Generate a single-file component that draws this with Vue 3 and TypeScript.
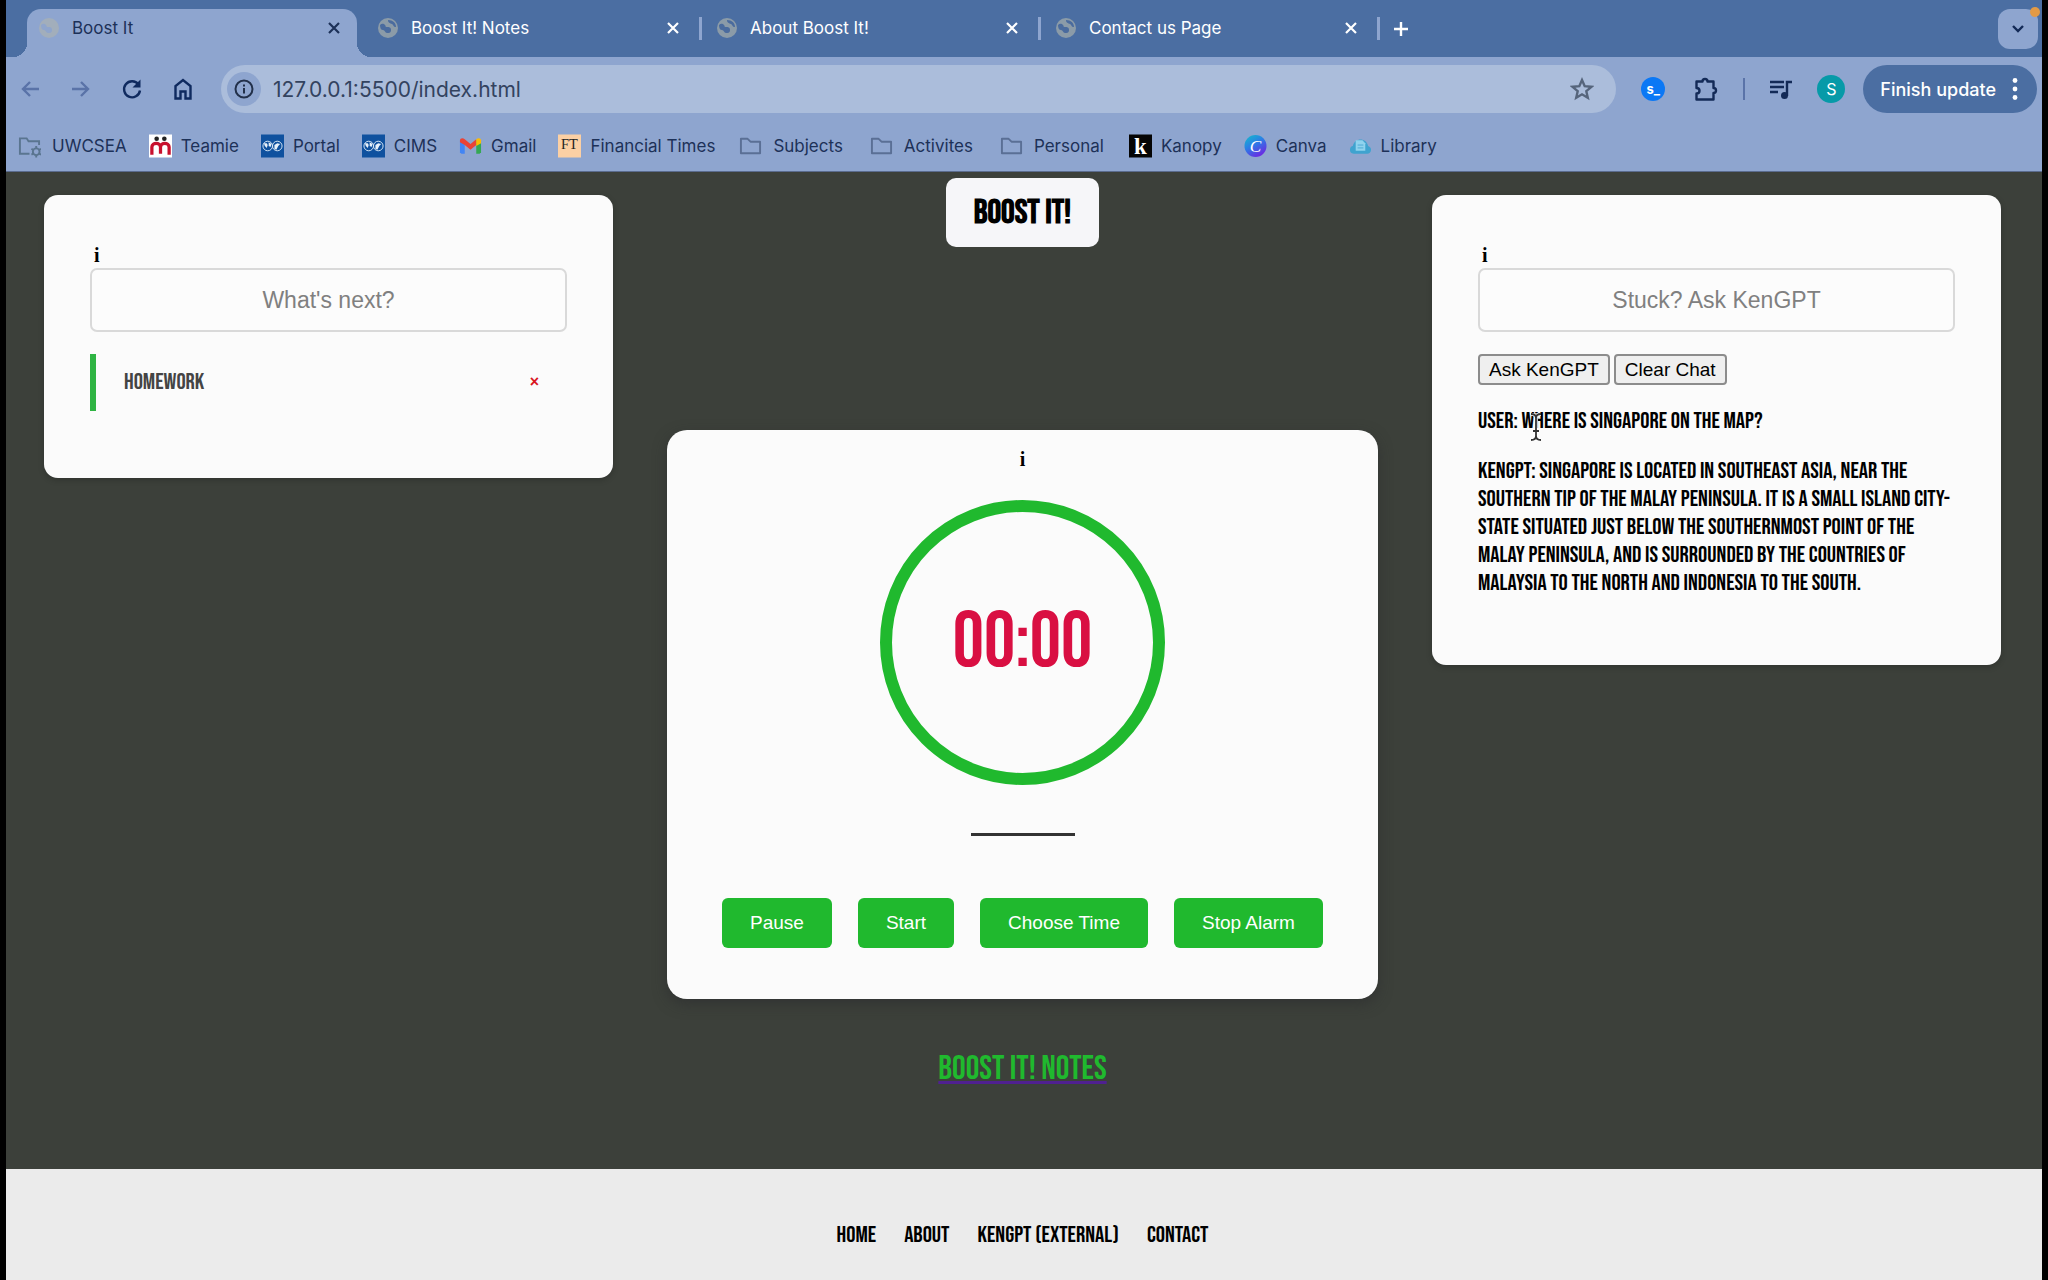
<script setup lang="ts">
import { ref } from 'vue'

interface Bookmark { label: string; icon: string }

const tabs = ref<string[]>(['Boost It', 'Boost It! Notes', 'About Boost It!', 'Contact us Page'])
const bookmarks: Bookmark[] = [
  { label: 'UWCSEA', icon: 'managed' },
  { label: 'Teamie', icon: 'teamie' },
  { label: 'Portal', icon: 'globe' },
  { label: 'CIMS', icon: 'globe' },
  { label: 'Gmail', icon: 'gmail' },
  { label: 'Financial Times', icon: 'ft' },
  { label: 'Subjects', icon: 'folder' },
  { label: 'Activites', icon: 'folder' },
  { label: 'Personal', icon: 'folder' },
  { label: 'Kanopy', icon: 'kanopy' },
  { label: 'Canva', icon: 'canva' },
  { label: 'Library', icon: 'library' },
]
const address = ref('127.0.0.1:5500/index.html')

const task = ref('')
const tasks = ref<string[]>(['Homework'])
function addTask() {
  if (task.value.trim()) tasks.value.push(task.value.trim())
  task.value = ''
}

const question = ref('')
const messages = ref<string[]>([
  'User: Where is Singapore on the map?',
  'KenGPT: Singapore is located in Southeast Asia, near the southern tip of the Malay Peninsula. It is a small island city-state situated just below the southernmost point of the Malay Peninsula, and is surrounded by the countries of Malaysia to the north and Indonesia to the south.',
])

const minutes = ref('')
const timerActions = ['Pause', 'Start', 'Choose Time', 'Stop Alarm']
const footerLinks = ['Home', 'About', 'KenGPT (External)', 'Contact']
</script>

<template>
  <div class="window">
    <header class="chrome">
      <div class="tabstrip">
        <template v-for="(tab, i) in tabs" :key="tab">
          <div class="tab" :class="{ active: i === 0 }">
            <svg class="favicon" viewBox="0 0 22 22">
              <circle cx="11" cy="11" r="10" :fill="i === 0 ? '#a2aebb' : '#8b9ba8'" />
              <path v-if="i > 0" d="M3 8c2-2 4-1 5 0s0 2 2 2 4 0 4 3-2 3-4 3-2-3-4-3-3-2-3-5zM11 3c0 3 2 3 4 4s1 3 4 3c0-4-3-7-8-7z" fill="#4a6b9e" />
              <path v-else d="M3 8c2-2 4-1 5 0s0 2 2 2 4 0 4 3-2 3-4 3-2-3-4-3-3-2-3-5z" fill="#8fa5cc" />
            </svg>
            <button class="tab-title">{{ tab }}</button>
            <button class="tab-close" :aria-label="'Close ' + tab">
              <svg width="12" height="12" viewBox="0 0 12 12"><path d="M1 1l10 10M11 1L1 11" stroke="currentColor" stroke-width="2.2" /></svg>
            </button>
          </div>
          <span class="tab-sep" :class="{ hidden: i === 0 }"></span>
        </template>
        <button class="new-tab" aria-label="New tab">
          <svg width="16" height="16" viewBox="0 0 16 16"><path d="M8 1v14M1 8h14" stroke="currentColor" stroke-width="2.4" /></svg>
        </button>
        <button class="tab-search" aria-label="Search tabs">
          <svg width="12" height="8" viewBox="0 0 12 8"><path d="M1 1l5 5 5-5" fill="none" stroke="currentColor" stroke-width="2.4" /></svg>
          <span class="dot"></span>
        </button>
      </div>

      <div class="toolbar">
        <nav class="nav-buttons">
          <button class="dim" aria-label="Back"><svg viewBox="0 0 24 24"><path d="M21 12H5M12 5l-7 7 7 7" /></svg></button>
          <button class="dim" aria-label="Forward"><svg viewBox="0 0 24 24"><path d="M3 12h16M12 5l7 7-7 7" /></svg></button>
          <button aria-label="Reload"><svg viewBox="0 0 24 24"><path d="M18.500 7.500A8 8 0 1 0 20 13.500" /><path d="M20.500 2.500v8h-8z" fill="currentColor" stroke="none" /></svg></button>
          <button aria-label="Home"><svg viewBox="0 0 24 24"><path d="M4.500 21.500V9L12 3l7.500 6v12.500h-5v-7h-5v7z" /></svg></button>
        </nav>
        <div class="omnibox">
          <span class="site-info">
            <svg width="20" height="20" viewBox="0 0 20 20"><circle cx="10" cy="10" r="8.500" fill="none" stroke="#22304a" stroke-width="2" /><path d="M10 9v5.500M10 5.500v2" stroke="#22304a" stroke-width="2" /></svg>
          </span>
          <input v-model="address" type="text" aria-label="Address" />
          <button class="star" aria-label="Bookmark this page">
            <svg width="24" height="24" viewBox="0 0 24 24"><path d="M12 3l2.700 6.200 6.700.6-5.100 4.400 1.500 6.600L12 17.300l-5.800 3.500 1.500-6.600L2.600 9.800l6.700-.6z" fill="none" stroke="#56657c" stroke-width="2.400" /></svg>
          </button>
        </div>
        <div class="extensions">
          <button class="ext-s" aria-label="Extension">s_</button>
          <button aria-label="Extensions"><svg width="26" height="26" viewBox="0 0 26 26"><path d="M3.500 5.500h6a2.500 2.500 0 0 1 5 0h6v6.500a2.500 2.500 0 0 1 0 5v6.500h-17v-6c4 0 4-5.500 0-5.500z" fill="none" stroke="#132a57" stroke-width="2.400" stroke-linejoin="round" /></svg></button>
          <span class="bar-sep"></span>
          <button aria-label="Media controls"><svg width="24" height="24" viewBox="0 0 24 24"><path d="M1 5h14M1 10h14M1 15h8M18 19V5h5" fill="none" stroke="#132a57" stroke-width="2.400" /><circle cx="15.500" cy="18.500" r="3.500" fill="#132a57" /></svg></button>
          <button class="avatar" aria-label="Profile">S</button>
        </div>
        <button class="update">
          Finish update
          <svg width="6" height="24" viewBox="0 0 6 24" fill="#fff"><circle cx="3" cy="3.500" r="2.400" /><circle cx="3" cy="12" r="2.400" /><circle cx="3" cy="20.500" r="2.400" /></svg>
        </button>
      </div>

      <nav class="bookmarks">
        <a v-for="b in bookmarks" :key="b.label" href="#" :class="b.icon">
          <svg class="mark" viewBox="0 0 24 24">
            <template v-if="b.icon === 'managed'">
              <path d="M12 20H2V4h7l2 3h11v4" fill="none" stroke="#5a7590" stroke-width="2" />
              <circle cx="19" cy="18" r="3.500" fill="none" stroke="#5a7590" stroke-width="2" />
              <path d="M19 12v2M19 22v2M14 15l2 1M22 20l2 1M24 15l-2 1M14 21l2-1" stroke="#5a7590" stroke-width="2" />
            </template>
            <path v-else-if="b.icon === 'folder'" d="M2 19.500v-15h7l3 3h10v12z" fill="none" stroke="#5a6f95" stroke-width="2" stroke-linejoin="round" />
            <template v-else-if="b.icon === 'teamie'">
              <path d="M0 0h24v24H0z" fill="#fff" />
              <circle cx="8" cy="4.500" r="2.400" fill="#222" /><circle cx="16" cy="4.500" r="2.400" fill="#222" />
              <path d="M3 21v-8c0-5 9-5 9 0v7M12 13c0-5 9-5 9 0v8" fill="none" stroke="#c8102e" stroke-width="3.400" />
            </template>
            <template v-else-if="b.icon === 'globe'">
              <path d="M0 0h24v24H0z" fill="#0f519f" />
              <circle cx="7" cy="12" r="5" fill="none" stroke="#d6e6f5" /><circle cx="17" cy="12" r="5" fill="none" stroke="#d6e6f5" />
              <path d="M3 9l3 0 1 2-1 3-2-2zM8 8l3 2-1 3-2-1zM14 15l0-4 3-2 3 1-2 2-2 4z" fill="#e8f1fa" />
            </template>
            <template v-else-if="b.icon === 'gmail'">
              <path d="M1 6h5v14H2.500L1 18.500z" fill="#4285f4" /><path d="M18 6h5v12.500L21.500 20H18z" fill="#34a853" />
              <path d="M1 6c0-2 3-3 5-1l6 5 6-5v6l-6 5-6-5-5-3z" fill="#ea4335" /><path d="M18 5c2-2 5-1 5 1v3l-5 3z" fill="#fbbc04" />
            </template>
            <template v-else-if="b.icon === 'ft'">
              <path d="M0 0h24v24H0z" fill="#fcd0a4" /><text x="12" y="15" text-anchor="middle" class="ft-text">FT</text>
            </template>
            <template v-else-if="b.icon === 'kanopy'">
              <path d="M0 0h24v24H0z" fill="#050505" /><text x="12" y="20" text-anchor="middle" class="kanopy-text">k</text>
            </template>
            <template v-else-if="b.icon === 'canva'">
              <defs><linearGradient id="cv" x1="0" y1="0" x2=".6" y2="1"><stop offset="0" stop-color="#12bfc9" /><stop offset=".5" stop-color="#2b7de6" /><stop offset="1" stop-color="#6a2be2" /></linearGradient></defs>
              <circle cx="12" cy="12" r="11.500" fill="url(#cv)" /><text x="12" y="18" text-anchor="middle" class="canva-text">C</text>
            </template>
            <template v-else>
              <path d="M1 16c0-3 2-4 3-4 2-9 14-9 16 0 2 1 3 2 3 4 0 3-2 4-4 4H5c-3 0-4-2-4-4z" fill="#3fa3cf" /><path d="M7 6h7l3 3v8H7z" fill="#8fd3ee" /><path d="M9 11h6M9 14h6" stroke="#4ba9d2" />
            </template>
          </svg>
          {{ b.label }}
        </a>
      </nav>
    </header>

    <main class="page">
      <section class="card side">
        <span class="info">i</span>
        <form @submit.prevent="addTask">
          <input v-model="task" class="field" type="text" placeholder="What's next?" aria-label="New task" />
        </form>
        <ul class="tasks">
          <li v-for="(t, i) in tasks" :key="t">
            {{ t }}
            <button aria-label="Remove task" @click="tasks.splice(i, 1)">×</button>
          </li>
        </ul>
      </section>

      <div class="middle">
        <h1 class="brand">Boost It!</h1>
        <section class="card timer">
          <span class="info">i</span>
          <div class="dial">00:00</div>
          <input v-model="minutes" class="minutes" type="text" aria-label="Minutes" />
          <div class="actions">
            <button v-for="a in timerActions" :key="a">{{ a }}</button>
          </div>
        </section>
        <a class="notes" href="#">Boost It! Notes</a>
      </div>

      <section class="card side chat">
        <span class="info">i</span>
        <input v-model="question" class="field" type="text" placeholder="Stuck? Ask KenGPT" aria-label="Question for KenGPT" />
        <div class="chat-buttons">
          <button>Ask KenGPT</button>
          <button @click="messages = []">Clear Chat</button>
        </div>
        <p v-for="m in messages" :key="m">{{ m }}</p>
        <svg class="caret" viewBox="0 0 12 28"><path d="M1 1c3 0 5 1 5 4v18c0 3-2 4-5 4M11 1c-3 0-5 1-5 4M6 23c0 3 2 4 5 4M3 18h6" fill="none" stroke="#fff" stroke-width="3.500" /><path d="M1 1c3 0 5 1 5 4v18c0 3-2 4-5 4M11 1c-3 0-5 1-5 4M6 23c0 3 2 4 5 4M3 18h6" fill="none" stroke="#333" stroke-width="1.800" /></svg>
      </section>
    </main>

    <footer class="footer">
      <a v-for="l in footerLinks" :key="l" href="#">{{ l }}</a>
    </footer>
  </div>
</template>

<style>
body { margin: 0; background: #000; }
</style>

<style scoped>
* { box-sizing: border-box; }
button { border: 0; padding: 0; background: none; color: inherit; font: inherit; }
a { color: inherit; text-decoration: none; }
.window {
  display: flex;
  flex-direction: column;
  min-height: 100vh;
  margin: 0 6px;
  background: #3c403a;
}
.chrome {
  background: #8ea5cf;
  border-bottom: 1px solid #5b6c8e;
  color: #1d3158;
  font-family: Inter, sans-serif;
}
.tabstrip {
  display: flex;
  align-items: center;
  height: 57px;
  padding: 0 4px 0 21px;
  background: #4b6ea2;
  color: #fff;
  font-size: 17px;
}
.tab {
  display: flex;
  flex: 0 1 330px;
  align-items: center;
  gap: 12px;
  align-self: flex-end;
  height: 48px;
  padding: 0 17px 10px 11px;
}
.tab.active {
  position: relative;
  background: #8ea5cf;
  border-radius: 14px 14px 0 0;
  color: #1d3158;
}
.tab.active::before,
.tab.active::after {
  content: '';
  position: absolute;
  bottom: 0;
  width: 14px;
  height: 14px;
}
.tab.active::before { right: 100%; background: radial-gradient(circle at 0 0, transparent 14px, #8ea5cf 14px); }
.tab.active::after { left: 100%; background: radial-gradient(circle at 100% 0, transparent 14px, #8ea5cf 14px); }
.favicon { width: 22px; height: 22px; }
.tab-title { flex: 1; text-align: left; }
.tab-close { display: flex; }
.tab-sep { width: 3px; height: 23px; margin: 0 3px; background: #8ea5cf; }
.tab-sep.hidden { visibility: hidden; }
.new-tab { display: flex; margin-left: 10px; }
.tab-search {
  position: relative;
  display: flex;
  align-items: center;
  justify-content: center;
  width: 40px;
  height: 40px;
  margin-left: auto;
  border-radius: 12px;
  background: #8ea5cf;
  color: #132a57;
}
.dot { position: absolute; top: -2px; right: -2px; width: 10px; height: 10px; border-radius: 50%; background: #e39a45; }
.toolbar { display: flex; align-items: center; padding: 8px 5px 8px 12px; }
.nav-buttons { display: flex; gap: 25px; color: #0f2a5f; }
.nav-buttons button { display: flex; width: 26px; }
.nav-buttons svg { width: 24px; height: 24px; fill: none; stroke: currentColor; stroke-width: 2.4; }
.nav-buttons .dim { color: #5a73a8; }
.omnibox {
  display: flex;
  flex: 1;
  align-items: center;
  height: 48px;
  margin-left: 24px;
  padding: 0 22px 0 6px;
  border-radius: 24px;
  background: #abbddb;
}
.site-info { display: flex; align-items: center; justify-content: center; width: 34px; height: 34px; border-radius: 50%; background: #8ea5cf; }
.omnibox input { flex: 1; margin-left: 12px; padding: 0; border: 0; outline: 0; background: none; color: #33435f; font: 21px Inter, sans-serif; }
.star { display: flex; }
.extensions { display: flex; align-items: center; gap: 24px; margin: 0 18px 0 25px; }
.extensions button { display: flex; align-items: center; justify-content: center; }
.extensions .ext-s { width: 24px; height: 24px; margin-right: 4px; border-radius: 50%; background: #0b78f5; color: #fff; font-size: 13px; font-weight: 700; }
.bar-sep { width: 2px; height: 22px; background: #5a73a8; }
.extensions .avatar { width: 28px; height: 28px; border-radius: 50%; background: #069aa8; color: #fff; font-size: 16px; }
.update { display: flex; align-items: center; gap: 16px; height: 48px; padding: 0 19px 0 17px; border-radius: 24px; background: #4b6ea2; color: #fff; font-size: 18px; font-weight: 500; white-space: nowrap; }
.bookmarks { display: flex; gap: 22px; padding: 13px 12px; font-size: 17px; line-height: 24px; white-space: nowrap; }
.bookmarks a { display: flex; align-items: center; gap: 9px; }
.bookmarks .managed, .bookmarks .folder { gap: 11px; }
.bookmarks .folder { padding: 0 3px 0 2px; }
.mark { width: 23px; height: 24px; }
.ft-text { font: 15px "Liberation Serif", serif; fill: #222; }
.kanopy-text { font: bold 24px "Liberation Serif", serif; fill: #fff; }
.canva-text { font: italic 18px "Liberation Serif", serif; fill: #fff; }

.page {
  display: grid;
  grid-template-columns: 569fr 711fr 569fr;
  align-items: start;
  gap: 54px;
  flex: 1;
  padding: 6px 41px 40px 38px;
  font-family: "Bebas Neue", "Liberation Sans Narrow", sans-serif;
  text-transform: uppercase;
}
.card { display: flex; flex-direction: column; background: #fbfbfb; }
.side { margin-top: 17px; padding: 48px 46px 67px; border-radius: 14px; box-shadow: 0 2px 6px rgba(0, 0, 0, .2); }
.info { color: #000; font: bold 20px/24px "Liberation Serif", serif; text-transform: none; }
.side .info { padding: 0 0 1px 4px; }
.field {
  width: 100%;
  height: 64px;
  padding: 0;
  border: 2px solid #d9d9d9;
  border-radius: 7px;
  background: #fcfcfc;
  font: 23px "Liberation Sans", sans-serif;
  text-align: center;
}
.field::placeholder { color: #808080; }
.tasks { margin: 22px 0 0; padding: 0; list-style: none; }
.tasks li { display: flex; align-items: center; justify-content: space-between; height: 57px; padding: 0 28px 2px; border-left: 6px solid #2fb443; color: #444; font-size: 23px; }
.tasks button { color: #d9151f; font: bold 16px "Liberation Sans", sans-serif; }
.chat { position: relative; padding-bottom: 68px; }
.chat-buttons { display: flex; gap: 4px; margin: 22px 0 22px; }
.chat-buttons button { height: 31px; padding: 0 9px; border: 2px solid #8c8c8c; border-radius: 4px; background: #efefef; color: #000; font: 19px "Liberation Sans", sans-serif; }
.chat p { margin: 0 0 22px; color: #000; font-size: 23px; line-height: 28px; }
.chat p:last-of-type { margin: 0; }
.caret { position: absolute; top: 218px; left: 98px; width: 12px; height: 28px; }
.middle { display: flex; flex-direction: column; align-items: center; }
.brand { margin: 0 0 183px; padding: 0 28px; border-radius: 10px; background: #f6f6f9; color: #000; font-size: 34px; line-height: 69px; }
.timer { align-items: center; align-self: stretch; padding: 17px 20px 51px; border-radius: 20px; box-shadow: 0 5px 14px rgba(40, 40, 44, .5); }
.dial { display: flex; align-items: center; justify-content: center; width: 285px; height: 285px; margin-top: 29px; border: 12px solid #20b92e; border-radius: 50%; color: #d90f42; font-size: 78px; }
.minutes { width: 104px; height: 30px; margin-top: 21px; border: 0; border-bottom: 3px solid #333; background: none; outline: 0; text-align: center; }
.actions { display: flex; gap: 26px; margin-top: 62px; }
.actions button { height: 50px; padding: 0 28px; border-radius: 6px; background: #20b92e; color: #fff; font: 19px "Liberation Sans", sans-serif; white-space: nowrap; }
.notes { margin-top: 54px; color: #20b92e; font-size: 34px; line-height: 32px; text-decoration: underline 3px #4f2090; text-underline-offset: 2px; }
.footer {
  display: flex;
  align-items: center;
  justify-content: center;
  gap: 28px;
  height: 111px;
  padding: 20px 3px 0 0;
  background: #ebebeb;
  color: #000;
  font: 23px "Bebas Neue", "Liberation Sans Narrow", sans-serif;
  text-transform: uppercase;
}
</style>
